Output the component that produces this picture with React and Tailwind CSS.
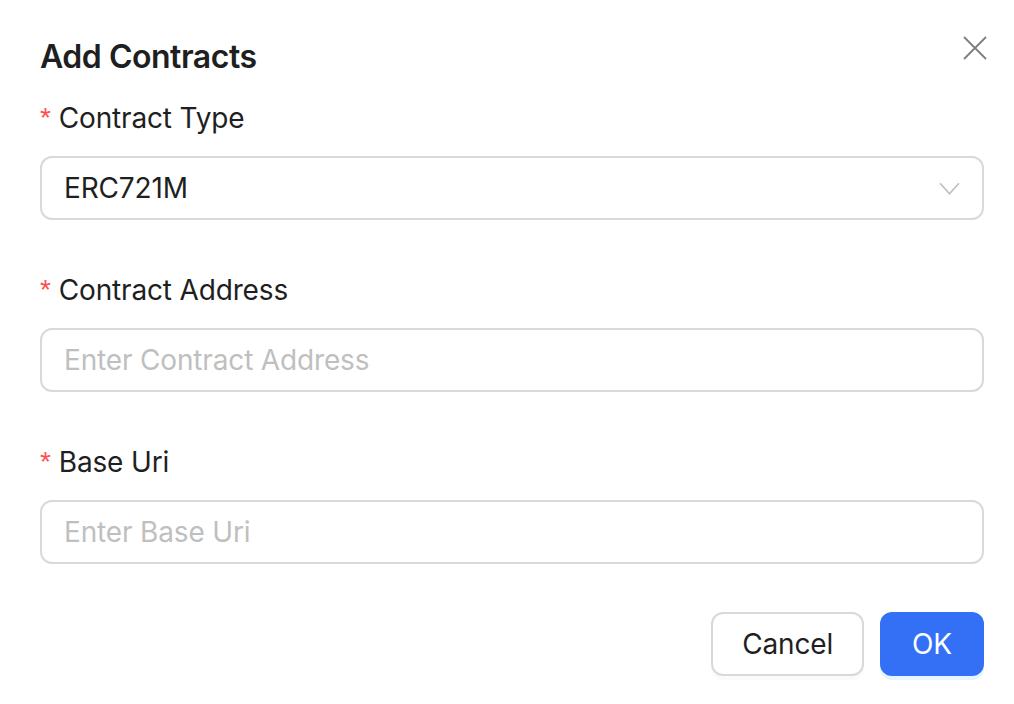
import React from 'react';

const Label = ({ children }) => (
  <div className="flex items-center h-[44px] mb-4 text-[28px] leading-[44px] text-[#1f1f1f]">
    <span className="text-[#ff4d4f] text-[28px] mr-2 font-['Liberation_Sans',sans-serif]">*</span>
    {children}
  </div>
);

const App = () => {
  return (
    <div className="w-[1014px] h-[704px] bg-white pl-10 pr-[30px] pt-8 font-['Inter',sans-serif] tracking-[-0.01em] relative">
      <div className="flex items-center justify-between h-12 mb-4">
        <h2 className="text-[32px] font-semibold text-[#1f1f1f] leading-[48px] tracking-[-0.015em] pt-[2px]">Add Contracts</h2>
        <button className="absolute right-[27px] top-[36px] w-[24px] h-[24px] text-[#808080]">
          <svg viewBox="0 0 24 24" width="24" height="24" fill="none" stroke="currentColor" strokeWidth="1.9">
            <path d="M1 1 L23 23 M23 1 L1 23" />
          </svg>
        </button>
      </div>

      <form className="flex flex-col">
        <div className="mb-12">
          <Label>Contract Type</Label>
          <div className="h-16 border-2 border-[#d9d9d9] rounded-xl flex items-center justify-between px-[22px] text-[28px] text-[#1f1f1f]">
            <span>ERC721M</span>
            <svg viewBox="0 0 20 12" width="21" height="13" fill="none" stroke="#bfbfbf" strokeWidth="1.6">
              <path d="M1 1 L10 11 L19 1" />
            </svg>
          </div>
        </div>

        <div className="mb-12">
          <Label>Contract Address</Label>
          <input
            placeholder="Enter Contract Address"
            className="w-full h-16 border-2 border-[#d9d9d9] rounded-xl px-[22px] text-[28px] text-[#1f1f1f] placeholder:text-[#bfbfbf] outline-none"
          />
        </div>

        <div className="mb-12">
          <Label>Base Uri</Label>
          <input
            placeholder="Enter Base Uri"
            className="w-full h-16 border-2 border-[#d9d9d9] rounded-xl px-[22px] text-[28px] text-[#1f1f1f] placeholder:text-[#bfbfbf] outline-none"
          />
        </div>

        <div className="flex justify-end gap-4">
          <button
            type="button"
            className="h-16 px-[29px] border-2 border-[#d9d9d9] rounded-xl text-[28px] text-[#1f1f1f] bg-white shadow-[0_4px_0_rgba(0,0,0,0.02)]"
          >
            Cancel
          </button>
          <button
            type="submit"
            className="h-16 px-[32px] rounded-xl text-[28px] text-white bg-[#3370f6] shadow-[0_4px_0_rgba(5,145,255,0.1)]"
          >
            OK
          </button>
        </div>
      </form>
    </div>
  );
};

export default App;
